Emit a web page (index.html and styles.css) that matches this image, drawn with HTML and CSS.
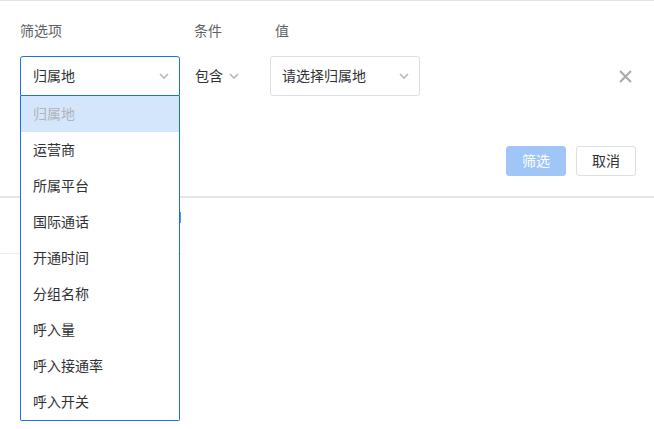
FILE: index.html
```html
<!DOCTYPE html>
<html lang="zh-CN">
<head>
<meta charset="utf-8">
<title>筛选</title>
<link rel="stylesheet" href="styles.css">
</head>
<body>
<div class="page">
  <section class="panel">
    <div class="grid">
      <div class="label">筛选项</div>
      <div class="label">条件</div>
      <div class="label label-val">值</div>
      <div></div>

      <div class="select select-active">
        <span>归属地</span>
        <svg class="chev" viewBox="0 0 10 6" width="10" height="6"><path d="M1 1l4 4 4-4" fill="none" stroke="#b4b7bd" stroke-width="1.6"/></svg>
      </div>
      <div class="cond">
        <span>包含</span>
        <svg class="chev" viewBox="0 0 10 6" width="10" height="6"><path d="M1 1l4 4 4-4" fill="none" stroke="#b4b7bd" stroke-width="1.6"/></svg>
      </div>
      <div class="select">
        <span>请选择归属地</span>
        <svg class="chev" viewBox="0 0 10 6" width="10" height="6"><path d="M1 1l4 4 4-4" fill="none" stroke="#b4b7bd" stroke-width="1.6"/></svg>
      </div>
      <div class="close-cell">
        <svg class="close" viewBox="0 0 12 12" width="13" height="13"><path d="M1 1l10 10M11 1L1 11" stroke="#a8abb2" stroke-width="2" fill="none"/></svg>
      </div>
    </div>
    <div class="actions">
      <button class="btn btn-primary">筛选</button>
      <button class="btn">取消</button>
    </div>
  </section>
  <div class="below">
    <div class="row-line"></div>
  </div>
  <div class="behind-mark"></div>
  <ul class="dropdown">
    <li class="item selected">归属地</li>
    <li class="item">运营商</li>
    <li class="item">所属平台</li>
    <li class="item">国际通话</li>
    <li class="item">开通时间</li>
    <li class="item">分组名称</li>
    <li class="item">呼入量</li>
    <li class="item">呼入接通率</li>
    <li class="item">呼入开关</li>
  </ul>
</div>
</body>
</html>
```

FILE: styles.css
```css
* { box-sizing: border-box; }
html, body { margin: 0; padding: 0; background: #fff; }
body {
  font-family: "Noto Sans CJK SC", "Noto Sans", "Liberation Sans", sans-serif;
  font-size: 14px;
  line-height: 20px;
  color: #303133;
}
.page { position: relative; width: 654px; height: 429px; overflow: hidden; }

.panel {
  border-top: 1px solid #e1e3e8;
  border-bottom: 2px solid #e3e5ea;
  height: 198px;
  padding: 19px 18px 0 20px;
  background: #fff;
}
.grid {
  display: grid;
  grid-template-columns: 160px 62px 150px 1fr;
  column-gap: 14px;
  row-gap: 16px;
  align-items: center;
}
.label { color: #606266; height: 20px; }
.label-val { padding-left: 5px; }

.select {
  height: 40px;
  border: 1px solid #dcdfe6;
  border-radius: 3px;
  display: flex;
  align-items: center;
  justify-content: space-between;
  padding: 0 10px 2px 11px;
  color: #303133;
}
.select .chev { margin-top: 2px; }
.select-active {
  border-color: #1a6fe3;
  border-radius: 3px 3px 0 0;
  padding-left: 12px;
}
.cond {
  height: 40px;
  display: flex;
  align-items: center;
  gap: 6px;
  padding: 0 0 2px 1px;
}
.cond .chev { margin-top: 2px; }
.chev { display: block; }
.close-cell { display: flex; justify-content: flex-end; padding-right: 4px; }
.close { display: block; }

.actions {
  display: flex;
  justify-content: flex-end;
  gap: 10px;
  margin-top: 50px;
}
.btn {
  width: 60px;
  height: 30px;
  border: 1px solid #dcdfe6;
  border-radius: 3px;
  background: #fff;
  color: #303133;
  font-family: inherit;
  font-size: 14px;
  line-height: 20px;
  padding: 0 0 2px;
}
.btn-primary {
  background: #a0c6f8;
  border-color: #a0c6f8;
  color: #fff;
}

.below { padding-top: 55px; }
.row-line { width: 182px; height: 1px; background: #ebedf2; }

.behind-mark {
  position: absolute;
  left: 180px;
  top: 212px;
  width: 1px;
  height: 11px;
  background: #4a9af5;
}

.dropdown {
  position: absolute;
  left: 20px;
  top: 96px;
  width: 160px;
  margin: 0;
  padding: 0;
  list-style: none;
  background: #fff;
  border: 1px solid #1a6fe3;
  border-top: none;
  border-radius: 0 0 2px 2px;
}
.item {
  height: 36px;
  line-height: 34px;
  padding: 0 0 2px 12px;
  color: #303133;
}
.item.selected {
  background: #d4e6fc;
  color: #b1b3b8;
}
```
